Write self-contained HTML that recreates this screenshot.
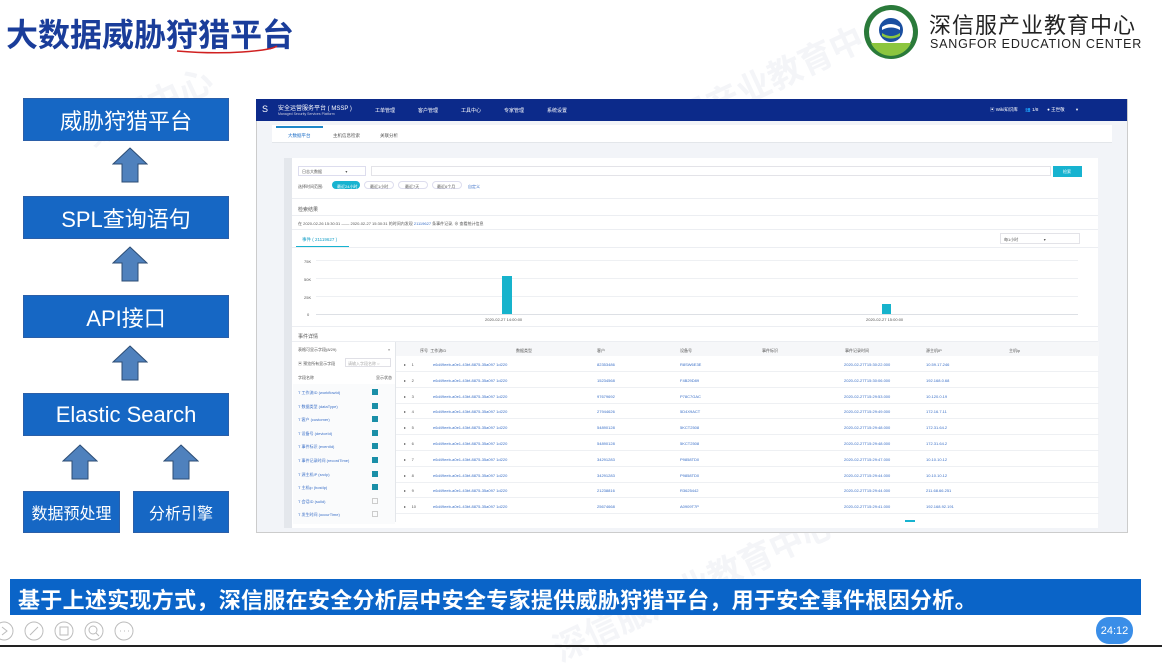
<!DOCTYPE html>
<html><head><meta charset="utf-8"><style>
*{margin:0;padding:0;box-sizing:border-box}
body{width:1162px;height:647px;overflow:hidden;background:#fff;font-family:"Liberation Sans","Noto Sans CJK SC",sans-serif;position:relative}
.a{position:absolute}
.box{position:absolute;background:#1667c4;color:#fff;display:flex;align-items:center;justify-content:center;font-size:22px;border:1px solid #2b5fa8}
.arr{position:absolute;width:36px;height:36px}
.t{position:absolute;font-size:4px;color:#555;white-space:nowrap}
.lk{color:#3a6fc7}
.wm{position:absolute;color:#f4f5f8;font-size:34px;font-weight:bold;transform:rotate(-25deg);white-space:nowrap}
</style></head><body>
<div class="wm" style="left:80px;top:80px">数育中心</div>
<div class="wm" style="left:600px;top:60px">深信服产业教育中心</div>
<div class="wm" style="left:540px;top:560px">深信服产业教育中心</div>
<div class="a" style="left:6px;top:10px;font-size:32px;font-weight:bold;color:#1a3d9a">大数据威胁狩猎平台</div>
<svg class="a" style="left:172px;top:42px" width="110" height="14"><path d="M5 9 Q40 12 70 10 T105 4" stroke="#d02020" stroke-width="1.5" fill="none"/></svg>
<svg class="a" style="left:862px;top:3px" width="58" height="58"><circle cx="29" cy="29" r="27" fill="#2a7a3a"/><circle cx="29" cy="29" r="22" fill="#fff"/><path d="M9 40 A22 22 0 0 0 49 40 Z" fill="#8cc63f"/><circle cx="29" cy="27" r="12" fill="#1a4fa0"/><path d="M20 24 Q29 18 38 24 L38 27 Q29 22 20 27Z" fill="#fff"/><path d="M20 30 Q29 36 38 30 L38 33 Q29 38 20 33Z" fill="#8cc63f"/></svg>
<div class="a" style="left:929px;top:8px;font-size:22px;color:#222;letter-spacing:1px">深信服产业教育中心</div>
<div class="a" style="left:930px;top:37px;font-size:12.5px;color:#222;letter-spacing:0.8px">SANGFOR EDUCATION CENTER</div>
<div class="box" style="left:23px;top:98px;width:206px;height:43px">威胁狩猎平台</div>
<div class="box" style="left:23px;top:196px;width:206px;height:43px">SPL查询语句</div>
<div class="box" style="left:23px;top:295px;width:206px;height:43px">API接口</div>
<div class="box" style="left:23px;top:393px;width:206px;height:43px">Elastic Search</div>
<div class="box" style="left:23px;top:491px;width:97px;height:42px;font-size:16px">数据预处理</div>
<div class="box" style="left:133px;top:491px;width:96px;height:42px;font-size:16px">分析引擎</div>
<svg class="arr" style="left:112px;top:147px"><path d="M18 1 L35 17 L26 17 L26 35 L10 35 L10 17 L1 17Z" fill="#4f81bd" stroke="#2c4d75"/></svg>
<svg class="arr" style="left:112px;top:246px"><path d="M18 1 L35 17 L26 17 L26 35 L10 35 L10 17 L1 17Z" fill="#4f81bd" stroke="#2c4d75"/></svg>
<svg class="arr" style="left:112px;top:345px"><path d="M18 1 L35 17 L26 17 L26 35 L10 35 L10 17 L1 17Z" fill="#4f81bd" stroke="#2c4d75"/></svg>
<svg class="arr" style="left:62px;top:444px"><path d="M18 1 L35 17 L26 17 L26 35 L10 35 L10 17 L1 17Z" fill="#4f81bd" stroke="#2c4d75"/></svg>
<svg class="arr" style="left:163px;top:444px"><path d="M18 1 L35 17 L26 17 L26 35 L10 35 L10 17 L1 17Z" fill="#4f81bd" stroke="#2c4d75"/></svg>
<div class="a" style="left:256px;top:99px;width:872px;height:434px;background:#f2f4f8;border:1px solid #ccc"></div>
<div class="a" style="left:256px;top:99px;width:871px;height:22px;background:#0c2a8a"></div>
<div class="t" style="left:262px;top:104px;color:#fff;font-size:9px">S</div>
<div class="t" style="left:278px;top:103px;color:#fff;font-size:6px">安全运营服务平台 ( MSSP )</div>
<div class="t" style="left:278px;top:112px;color:#ccd;font-size:3.5px">Managed Security Services Platform</div>
<div class="t" style="left:375px;top:107px;color:#fff;font-size:5px">工单管理</div>
<div class="t" style="left:418px;top:107px;color:#fff;font-size:5px">客户管理</div>
<div class="t" style="left:461px;top:107px;color:#fff;font-size:5px">工具中心</div>
<div class="t" style="left:504px;top:107px;color:#fff;font-size:5px">专家管理</div>
<div class="t" style="left:547px;top:107px;color:#fff;font-size:5px">系统设置</div>
<div class="t" style="left:990px;top:107px;color:#fff;font-size:4.5px">▣ Wiki知识库 &nbsp;&nbsp;&nbsp;&nbsp; 👥 1/8 &nbsp;&nbsp;&nbsp;&nbsp;&nbsp; ● 王世敬 &nbsp;&nbsp;&nbsp;&nbsp;&nbsp;&nbsp;&nbsp; ▾</div>
<div class="a" style="left:272px;top:125px;width:840px;height:18px;background:#fff;border-bottom:1px solid #e3e6ea"></div>
<div class="a" style="left:276px;top:126px;width:47px;height:1.5px;background:#1e88c8"></div>
<div class="t" style="left:288px;top:133px;color:#1e6fc8;font-size:4.5px">大数据平台</div>
<div class="t" style="left:333px;top:133px;font-size:4.5px">主机信息检索</div>
<div class="t" style="left:380px;top:133px;font-size:4.5px">关联分析</div>
<div class="a" style="left:284px;top:158px;width:814px;height:370px;background:#fff;border-left:8px solid #e4e7ec"></div>
<div class="a" style="left:298px;top:166px;width:68px;height:10px;border:1px solid #dde;"></div>
<div class="t" style="left:302px;top:169px">日志大数据 &nbsp;&nbsp;&nbsp;&nbsp;&nbsp;&nbsp;&nbsp;&nbsp;&nbsp;&nbsp;&nbsp;&nbsp;&nbsp;&nbsp;&nbsp;&nbsp;&nbsp;&nbsp;&nbsp; ▾</div>
<div class="a" style="left:371px;top:166px;width:680px;height:10px;border:1px solid #e3e3e8"></div>
<div class="a" style="left:1053px;top:166px;width:29px;height:11px;background:#17b3d0"></div>
<div class="t" style="left:1063px;top:169px;color:#fff">检索</div>
<div class="t" style="left:298px;top:184px">选择时间范围:</div>
<div class="a" style="left:332px;top:181px;width:28px;height:8px;border-radius:5px;background:#17b3d0"></div>
<div class="t" style="left:337px;top:184px;color:#fff">最近24小时</div>
<div class="a" style="left:364px;top:181px;width:30px;height:8px;border-radius:5px;border:1px solid #dde"></div>
<div class="a" style="left:398px;top:181px;width:30px;height:8px;border-radius:5px;border:1px solid #dde"></div>
<div class="a" style="left:432px;top:181px;width:30px;height:8px;border-radius:5px;border:1px solid #dde"></div>
<div class="t" style="left:370px;top:184px">最近1小时</div>
<div class="t" style="left:405px;top:184px">最近7天</div>
<div class="t" style="left:437px;top:184px">最近6个月</div>
<div class="t lk" style="left:468px;top:184px">自定义</div>
<div class="a" style="left:292px;top:198px;width:806px;height:1px;background:#eceef2"></div>
<div class="t" style="left:298px;top:206px;font-size:5px">检索结果</div>
<div class="a" style="left:292px;top:215px;width:806px;height:1px;background:#eceef2"></div>
<div class="t" style="left:298px;top:221px">在 2020-02-26 15:30:31 —— 2020-02-27 15:30:31 的时间内发现 <span class="lk">21119627</span> 条事件记录, ⊕ 查看统计信息</div>
<div class="a" style="left:292px;top:229px;width:806px;height:1px;background:#eceef2"></div>
<div class="t" style="left:302px;top:237px;color:#17a0c8;font-size:4.5px">事件 ( 21119627 )</div>
<div class="a" style="left:296px;top:246px;width:53px;height:1.5px;background:#17b3d0"></div>
<div class="a" style="left:1000px;top:233px;width:80px;height:11px;border:1px solid #e3e3e8"></div>
<div class="t" style="left:1004px;top:237px">每1小时 &nbsp;&nbsp;&nbsp;&nbsp;&nbsp;&nbsp;&nbsp;&nbsp;&nbsp;&nbsp;&nbsp;&nbsp;&nbsp;&nbsp;&nbsp;&nbsp;&nbsp;&nbsp;&nbsp;&nbsp;&nbsp; ▾</div>
<div class="a" style="left:292px;top:247px;width:806px;height:1px;background:#eceef2"></div>
<div class="a" style="left:316px;top:260px;width:762px;height:1px;background:#eef0f3"></div>
<div class="a" style="left:316px;top:278px;width:762px;height:1px;background:#eef0f3"></div>
<div class="a" style="left:316px;top:296px;width:762px;height:1px;background:#eef0f3"></div>
<div class="a" style="left:316px;top:314px;width:762px;height:1px;background:#dde0e5"></div>
<div class="t" style="left:304px;top:259px">75K</div><div class="t" style="left:304px;top:277px">50K</div><div class="t" style="left:304px;top:295px">25K</div><div class="t" style="left:307px;top:312px">0</div>
<div class="a" style="left:502px;top:276px;width:10px;height:38px;background:#17b3cc"></div>
<div class="a" style="left:882px;top:304px;width:9px;height:10px;background:#17b3cc"></div>
<div class="t" style="left:485px;top:317px">2020-02-27 14:00:00</div>
<div class="t" style="left:866px;top:317px">2020-02-27 15:00:00</div>
<div class="a" style="left:292px;top:326px;width:806px;height:1px;background:#eceef2"></div>
<div class="t" style="left:298px;top:333px;font-size:5px">事件详情</div>
<div class="a" style="left:292px;top:341px;width:806px;height:1px;background:#eceef2"></div>
<div class="a" style="left:395px;top:342px;width:1px;height:180px;background:#e3e6ea"></div>
<div class="a" style="left:293px;top:384px;width:102px;height:140px;background:#fafbfc"></div>
<div class="t" style="left:298px;top:347px">表格可显示字段(8/29)</div><div class="t" style="left:388px;top:347px">«</div>
<div class="t" style="left:298px;top:361px">▣ 预览所有显示字段</div>
<div class="a" style="left:345px;top:358px;width:46px;height:9px;border:1px solid #e0e0e6"></div>
<div class="t" style="left:348px;top:361px;color:#aaa">请输入字段名称 ○</div>
<div class="t" style="left:298px;top:375px">字段名称</div><div class="t" style="left:376px;top:375px">显示状态</div>
<div class="a" style="left:396px;top:342px;width:703px;height:14px;background:#f6f7f9"></div>
<div class="t" style="left:420px;top:348px">序号 &nbsp;工作流ID</div>
<div class="t" style="left:516px;top:348px">数据类型</div>
<div class="t" style="left:597px;top:348px">客户</div>
<div class="t" style="left:680px;top:348px">设备号</div>
<div class="t" style="left:762px;top:348px">事件标识</div>
<div class="t" style="left:845px;top:348px">事件记录时间</div>
<div class="t" style="left:926px;top:348px">源主机IP</div>
<div class="t" style="left:1009px;top:348px">主机ip</div>
<div id="rows"></div>
<div class="a" style="left:905px;top:520px;width:10px;height:2px;background:#17b3d0"></div>
<div class="a" style="left:10px;top:579px;width:1131px;height:36px;background:#0a64c8"></div>
<div class="a" style="left:18px;top:583px;font-size:22px;font-weight:bold;color:#fff;letter-spacing:0.3px;white-space:nowrap">基于上述实现方式，深信服在安全分析层中安全专家提供威胁狩猎平台，用于安全事件根因分析。</div>
<svg class="a" style="left:0px;top:619px" width="140" height="24" fill="none" stroke="#bbb"><circle cx="4" cy="12" r="9"/><circle cx="34" cy="12" r="9"/><circle cx="64" cy="12" r="9"/><circle cx="94" cy="12" r="9"/><circle cx="124" cy="12" r="9"/><path d="M2 8 L7 12 L2 16"/><path d="M30 16 L38 8"/><rect x="60" y="8" width="8" height="8"/><circle cx="93" cy="11" r="4"/><path d="M96 14 L99 17"/><path d="M120 12h1M124 12h1M128 12h1"/></svg>
<div class="a" style="left:1096px;top:617px;width:37px;height:27px;border-radius:13px;background:#3a8ee8;color:#fff;font-size:11px;display:flex;align-items:center;justify-content:center">24:12</div>
<div class="a" style="left:0;top:645px;width:1162px;height:2px;background:#222"></div>
<script>
var f=["工作流ID (workflowId)","数据类型 (dataType)","客户 (customer)","设备号 (deviceId)","事件标识 (eventId)","事件记录时间 (recordTime)","源主机IP (srcIp)","主机ip (hostIp)","会话ID (sulid)","发生时间 (occurTime)"];
var c=["82353486","15234568","97679692","27944626","54890128","54890128","34291283","34291283","21238816","25674668"];
var d=["R8SW6E3E","F4B29D89","P78C7GAC","5D4X9ACT","5KCT2508","5KCT2508","P9858TD0","P9858TD0","R3625442","A0909T7P"];
var t=["30:22","30:06","29:53","29:49","29:48","29:48","29:47","29:44","29:44","29:41"];
var ip=["10.59.17.246","192.168.0.68","10.120.0.19","172.16.7.11","172.31.64.2","172.31.64.2","10.10.10.12","10.10.10.12","211.68.66.251","192.168.92.191"];
var h="";
for(var i=0;i<10;i++){var y=362+i*15.8;var fy=389+i*13.6;
h+='<div class="t" style="left:298px;top:'+(fy+1)+'px;color:#3a6fc7">T '+f[i]+'</div>';
h+='<div class="a" style="left:372px;top:'+fy+'px;width:6px;height:6px;'+(i<8?'background:#1a8fa8':'border:1px solid #ccc')+'"></div>';
h+='<div class="t" style="left:404px;top:'+y+'px">▸ &nbsp;&nbsp;&nbsp; '+(i+1)+'</div>';
h+='<div class="t lk" style="left:433px;top:'+y+'px">e6d49eeb-a0e1-43bf-8875-35a097 1d220</div>';
h+='<div class="t lk" style="left:597px;top:'+y+'px">'+c[i]+'</div>';
h+='<div class="t lk" style="left:680px;top:'+y+'px">'+d[i]+'</div>';
h+='<div class="t lk" style="left:844px;top:'+y+'px">2020-02-27T15:'+t[i]+'.000</div>';
h+='<div class="t lk" style="left:926px;top:'+y+'px">'+ip[i]+'</div>';
h+='<div class="a" style="left:396px;top:'+(y+9)+'px;width:703px;height:1px;background:#eef0f3"></div>';}
document.getElementById("rows").innerHTML=h;
</script>
</body></html>
